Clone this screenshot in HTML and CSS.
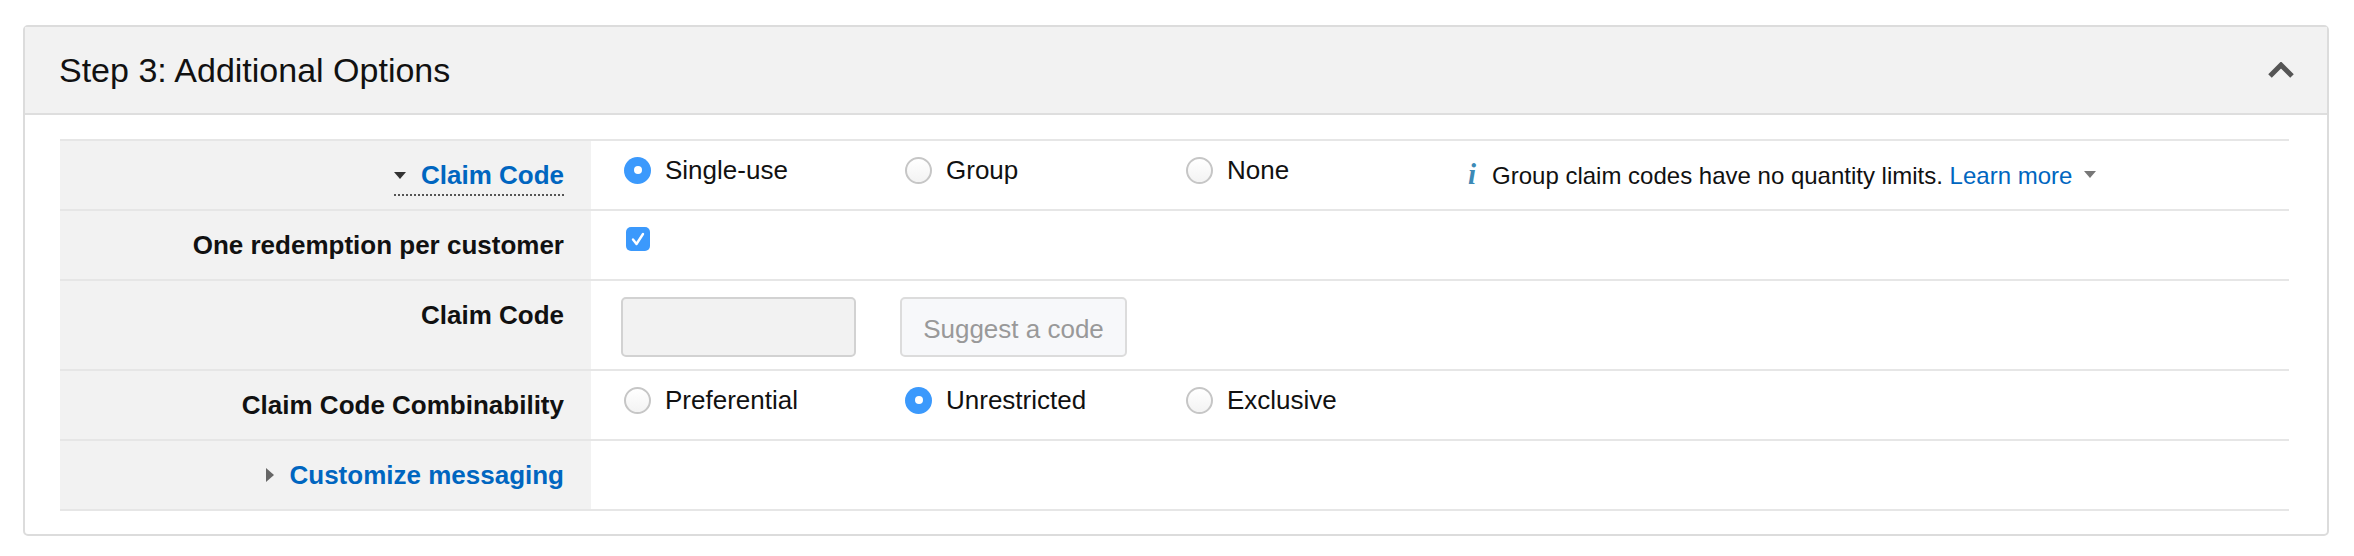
FILE: index.html
```html
<!DOCTYPE html>
<html lang="en">
<head>
    <meta charset="UTF-8">
    <meta name="viewport" content="width=device-width, initial-scale=1.0">
    <title>Step 3: Additional Options</title>
    <link rel="stylesheet" href="styles.css">
</head>
<body>
    <div class="page">
        <section class="panel">
            <header class="panel-head">
                <h2>Step 3: Additional Options</h2>
                <svg class="chevron" width="26" height="16" viewBox="0 0 26 16">
                    <polyline points="2,14 13,3 24,14" fill="none" stroke="#555" stroke-width="5"/>
                </svg>
            </header>
            <div class="panel-body">
                <div class="form-table">
                    <div class="row">
                        <div class="label">
                            <a class="toggle open"><span class="caret-down"></span>Claim Code</a>
                        </div>
                        <div class="value">
                            <label class="opt"><span class="radio checked"></span>Single-use</label>
                            <label class="opt"><span class="radio"></span>Group</label>
                            <label class="opt"><span class="radio"></span>None</label>
                            <div class="info"><span class="info-icon">i</span>Group claim codes have no quantity limits. <a class="link">Learn more</a><span class="caret-small"></span></div>
                        </div>
                    </div>
                    <div class="row">
                        <div class="label">One redemption per customer</div>
                        <div class="value">
                            <span class="checkbox">
                                <svg width="24" height="24" viewBox="0 0 24 24">
                                    <polyline points="7,12.5 10.5,17 17,7" fill="none" stroke="#fff" stroke-width="2.4" stroke-linecap="round" stroke-linejoin="round"/>
                                </svg>
                            </span>
                        </div>
                    </div>
                    <div class="row">
                        <div class="label">Claim Code</div>
                        <div class="value tall">
                            <input class="code-input" type="text" disabled>
                            <button class="suggest" disabled>Suggest a code</button>
                        </div>
                    </div>
                    <div class="row">
                        <div class="label">Claim Code Combinability</div>
                        <div class="value">
                            <label class="opt"><span class="radio"></span>Preferential</label>
                            <label class="opt"><span class="radio checked"></span>Unrestricted</label>
                            <label class="opt"><span class="radio"></span>Exclusive</label>
                        </div>
                    </div>
                    <div class="row">
                        <div class="label">
                            <a class="toggle"><span class="caret-right"></span>Customize messaging</a>
                        </div>
                        <div class="value"></div>
                    </div>
                </div>
            </div>
        </section>
    </div>
</body>
</html>
```

FILE: styles.css
```css
body {
    margin: 0;
    background: #fff;
    font-family: "Liberation Sans", Arial, sans-serif;
    color: #111;
}
.page {
    padding: 25px 25px 0 23px;
}
.panel {
    border: 2px solid #dcdcdc;
    border-radius: 5px;
    background: #fff;
}
.panel-head {
    display: flex;
    align-items: center;
    justify-content: space-between;
    background: #f2f2f2;
    border-bottom: 2px solid #dedede;
    padding: 23px 33px 23px 34px;
}
.panel-head h2 {
    margin: 0;
    font-size: 34px;
    line-height: 40px;
    font-weight: normal;
    color: #111;
}
.chevron {
    display: block;
}
.panel-body {
    padding: 24px 38px 23px 35px;
}
.form-table {
    border-bottom: 2px solid #e6e6e6;
}
.row {
    display: grid;
    grid-template-columns: 531px 1fr;
    border-top: 2px solid #e6e6e6;
}
.label {
    background: #f2f2f2;
    text-align: right;
    padding: 19px 27px 19px 0;
    font-size: 26px;
    line-height: 30px;
    font-weight: bold;
    color: #111;
}
.toggle {
    display: inline-flex;
    align-items: center;
    gap: 15px;
    color: #0066c0;
    height: 30px;
    vertical-align: top;
}
.toggle.open {
    padding-bottom: 4px;
    margin-bottom: -6px;
    border-bottom: 2px dotted #555;
}
.caret-down {
    width: 0;
    height: 0;
    border-left: 6px solid transparent;
    border-right: 6px solid transparent;
    border-top: 7px solid #333;
}
.caret-right {
    width: 0;
    height: 0;
    border-top: 7px solid transparent;
    border-bottom: 7px solid transparent;
    border-left: 8px solid #666;
}
.value {
    display: flex;
    align-items: flex-start;
    padding: 14px 0 12px 30px;
    font-size: 26px;
    line-height: 30px;
}
.value.tall {
    padding-top: 16px;
    gap: 44px;
}
.opt {
    display: flex;
    align-items: center;
    width: 281px;
    height: 30px;
}
.radio {
    box-sizing: border-box;
    width: 27px;
    height: 27px;
    margin: 0 14px 0 3px;
    border-radius: 50%;
    border: 2px solid #c6c6c6;
    background: linear-gradient(#fff, #f3f3f3);
}
.radio.checked {
    border: none;
    background: #3b99fc;
    display: flex;
    align-items: center;
    justify-content: center;
}
.radio.checked::after {
    content: "";
    width: 8px;
    height: 8px;
    border-radius: 50%;
    background: #fff;
}
.checkbox {
    display: block;
    width: 24px;
    height: 24px;
    margin: 2px 0 0 5px;
    border-radius: 5px;
    background: #3b99fc;
}
.checkbox svg {
    display: block;
}
.info {
    margin-top: 6px;
    font-size: 24px;
    line-height: 30px;
    color: #111;
    white-space: nowrap;
}
.info-icon {
    font-family: "Liberation Serif", serif;
    font-style: italic;
    font-weight: bold;
    font-size: 29px;
    line-height: 20px;
    color: #3c8ab6;
    margin: 0 16px 0 4px;
}
.link {
    color: #0066c0;
}
.caret-small {
    display: inline-block;
    vertical-align: middle;
    width: 0;
    height: 0;
    margin: 0 0 6px 12px;
    border-left: 6px solid transparent;
    border-right: 6px solid transparent;
    border-top: 7px solid #777;
}
.code-input {
    box-sizing: border-box;
    width: 235px;
    height: 60px;
    background: #f2f2f2;
    border: 2px solid #d2d2d2;
    border-radius: 5px;
}
.suggest {
    box-sizing: border-box;
    width: 227px;
    height: 60px;
    padding-top: 5px;
    background: #f7f8fa;
    border: 2px solid #dcdcdc;
    border-radius: 5px;
    font-family: "Liberation Sans", Arial, sans-serif;
    font-size: 26px;
    color: #999;
}
```
